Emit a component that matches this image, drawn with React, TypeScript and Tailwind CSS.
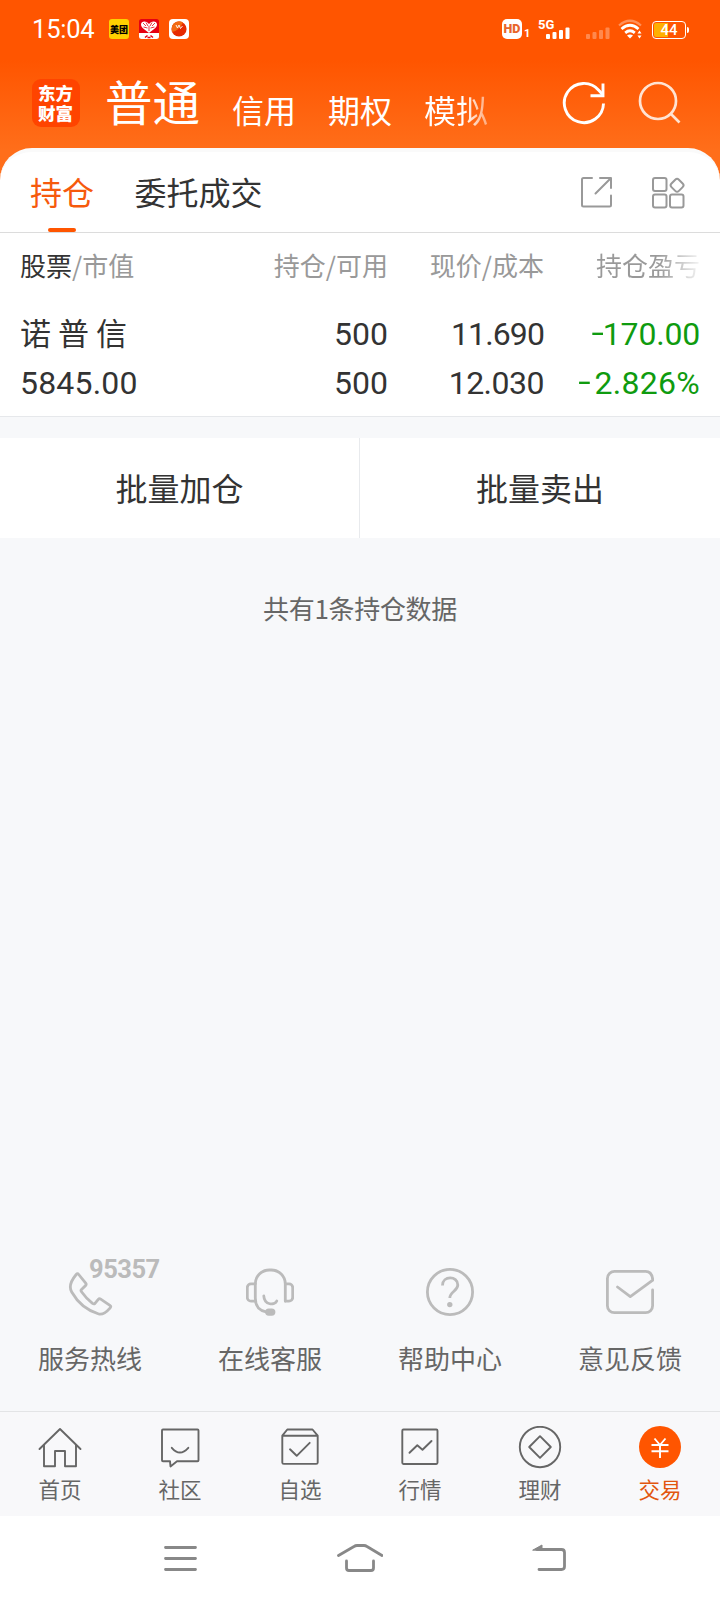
import type { ReactNode } from "react";

type IconProps = { children: ReactNode; size?: number; stroke?: number };

function LineIcon({ children, size = 44, stroke = 1.9 }: IconProps) {
  return (
    <svg
      width={size}
      height={size}
      viewBox={`0 0 ${size} ${size}`}
      fill="none"
      stroke="currentColor"
      strokeWidth={stroke}
      strokeLinecap="round"
      strokeLinejoin="round"
      className="block shrink-0"
    >
      {children}
    </svg>
  );
}

const services = [
  {
    label: "服务热线",
    badge: "95357",
    icon: (
      <path d="M10.2 6.500q1.300-1.500 2.500 0l7 8.600q1 1.400-.2 2.500l-4 3.800q-1 1 0 2.300 4.800 6.800 11 11.700 1.400 1 2.500 0l3.300-4q1-1.200 2.400-.3l9.200 6.200q1.600 1.100.3 2.500-6.500 7.500-11.500 6.200Q15 40.500 5.700 24 1.500 17 10.200 6.500Z" />
    ),
  },
  {
    label: "在线客服",
    icon: (
      <>
        <path d="M39.300 33V16a14 14 0 0 0-14-14h-2a14 14 0 0 0-14 14V30Q9.300 42 20 43.800" />
        <path d="M9.300 15.800H5a3.700 3.700 0 0 0-3.700 3.700v10A3.700 3.700 0 0 0 5 33.200h4.300M39.300 15.800H43a3.700 3.700 0 0 1 3.700 3.700v10a3.700 3.700 0 0 1-3.700 3.700h-3.700" />
        <path d="M17.800 28c.5 9.500 11 9.500 13 5" />
        <rect x="20.500" y="41.800" width="7.500" height="4.600" rx="2.300" fill="currentColor" />
      </>
    ),
  },
  {
    label: "帮助中心",
    icon: (
      <>
        <circle cx="24" cy="24" r="22.600" />
        <path d="M16.500 17.500C16.500 7.300 31.800 7.500 31.800 17c0 6-8 6.500-8 13" strokeLinecap="butt" />
        <circle cx="23.800" cy="36.600" r="1.300" fill="currentColor" />
      </>
    ),
  },
  {
    label: "意见反馈",
    icon: (
      <path d="M46.600 22V37.700a7 7 0 0 1-7 7H8.400a7 7 0 0 1-7-7V10.400a7 7 0 0 1 7-7h31.200q6.500 0 7.200 8.800L24.300 28.600 11.500 19" />
    ),
  },
];

const tabs = [
  {
    label: "首页",
    icon: (
      <>
        <path d="M1.500 23 22 3l20.500 20" />
        <path d="M6 19v21.200h11V25h10v15.200h11V19" />
      </>
    ),
  },
  {
    label: "社区",
    icon: (
      <>
        <path d="M5 3.500h34.500q1 0 1 1v29.700q0 1-1 1H19l-6.500 5.200-.5-5.200H5q-1 0-1-1V4.500q0-1 1-1Z" />
        <path d="M13.800 21.800q8 9.500 16.500 0" />
      </>
    ),
  },
  {
    label: "自选",
    icon: (
      <>
        <path d="M4.300 9.700h35.400v26.700q0 1.500-1.500 1.500H5.800q-1.500 0-1.500-1.500ZM4.300 9.700l5-6.200h25.200l5.200 6.200" />
        <path d="m12 23.300 6.700 6.500 13-13" />
      </>
    ),
  },
  {
    label: "行情",
    icon: (
      <>
        <rect x="4.300" y="3.500" width="35.200" height="34.500" rx="1.200" />
        <path d="m11.500 26.800 7.800-7.500 5.200 4.500 9-8.800" />
      </>
    ),
  },
  {
    label: "理财",
    icon: (
      <>
        <circle cx="22" cy="21" r="20.200" />
        <path d="m22 10.200 10.800 10.800L22 31.800 11.200 21Z" />
      </>
    ),
  },
  {
    label: "交易",
    active: true,
    icon: (
      <>
        <circle cx="22" cy="21" r="21" fill="#ff5500" stroke="none" />
        <path d="m16.500 12.500 5.500 6.500 5.500-6.500M22 19v13M13.500 19h17M13.500 25.200h17" stroke="#fff" strokeLinecap="butt" />
      </>
    ),
  },
];

function SignalBars({ dim = false }: { dim?: boolean }) {
  return (
    <svg width="24" height="12" viewBox="0 0 24 12" fill="#fff" opacity={dim ? 0.3 : 1} className="block">
      <rect x="0" y="7" width="4" height="5" rx="1" />
      <rect x="6.500" y="5" width="4" height="7" rx="1" />
      <rect x="13" y="3" width="4" height="9" rx="1" />
      <rect x="19.500" y="0.500" width="4" height="11.500" rx="1" />
    </svg>
  );
}

function StatusBar() {
  return (
    <div className="flex h-[58px] items-center pl-8 pr-8 text-white">
      <span className="w-[77px] pt-0.5 font-[Roboto] text-[25.500px] leading-none tracking-[-0.200px]">15:04</span>
      <div className="flex gap-2.5">
        <span className="flex size-5 items-center justify-center rounded-[3px] bg-[#ffd000] text-[9px] font-black leading-none text-black">
          美团
        </span>
        <svg width="20" height="20" viewBox="0 0 20 20" className="block">
          <rect width="20" height="20" rx="2.500" fill="#e60012" />
          <path d="M0 14h20v3.500a2.500 2.500 0 0 1-2.500 2.500h-15A2.500 2.500 0 0 1 0 17.500Z" fill="#fff" />
          <path d="M10 14C7 11 2 9 2 5.500S7 1 10 5c3-4 8-3 8 .5S13 11 10 14Z" fill="#fff" />
          <path d="M4 4l3 3M7 3.500 9 7M16 4l-3 3M13 3.500 11 7M4.500 8l4 1M15.500 8l-4 1M10 7v5" stroke="#e60012" strokeWidth="0.800" />
          <path d="M6 18.500l2.500-2M14 18.500l-2.500-2M8.500 18.500h3" stroke="#e60012" strokeWidth="1.500" />
        </svg>
        <svg width="20" height="20" viewBox="0 0 20 20" className="block">
          <rect width="20" height="20" rx="4" fill="#fff" />
          <circle cx="10" cy="10" r="7.600" fill="#e62a00" />
          <path d="M3 7a7.600 7.600 0 0 1 11-3.500Q10 12 3 13Z" fill="#f26a12" />
          <path d="m7 6 1.500 3 1.500-3 1.500 3.500 2-2.500" fill="none" stroke="#fff" strokeWidth="0.900" />
        </svg>
      </div>
      <div className="ml-auto flex h-5 items-end">
        <span className="flex size-5 items-center justify-center rounded-[5px] bg-white font-[Roboto] text-[12.500px] font-black leading-none text-[#e8662a]">
          HD
        </span>
        <span className="ml-0.5 w-[14px] font-[Roboto] text-[11px] font-bold leading-[10px]">1</span>
        <div className="relative ml-2 mr-4">
          <SignalBars />
          <span className="absolute -left-2 -top-[9px] font-[Roboto] text-[13px] font-bold leading-[13px]">5G</span>
        </div>
        <SignalBars dim />
        <svg width="25" height="20" viewBox="0 0 25 20" fill="none" stroke="#fff" className="ml-2 block">
          <path d="M1 6.500q11-9.500 22 0" strokeWidth="2.200" opacity="0.350" />
          <path d="M3.500 10q8.500-7.500 17 0" strokeWidth="2.800" />
          <path d="M7.200 13.800q4.800-4 9.600 0" strokeWidth="2.800" />
          <path d="m9 16.500 3 3 3-3q-3-2-6 0Z" fill="#fff" stroke="none" />
          <path d="m19.500 14.500 2-3 2 3ZM19.500 16.500l2 3 2-3Z" fill="#fff" stroke="none" />
        </svg>
        <div className="relative ml-[9px] mr-0.5 flex h-[18px] w-[34px] items-center justify-center rounded-[4px] border-[1.500px] border-white p-px">
          <span className="absolute inset-y-px left-px w-[14px] rounded-l-[2px] bg-[#ffb000]" />
          <span className="relative font-[Roboto] text-[15px] font-medium leading-none">44</span>
          <span className="absolute -right-[3.500px] top-[5px] h-[6px] w-[2px] rounded-r bg-white" />
        </div>
      </div>
    </div>
  );
}

function AppHeader() {
  return (
    <div className="flex h-[90px] pl-8 pr-[38px] text-white">
      <div className="mt-[21px] flex size-12 shrink-0 items-center justify-center rounded-[9px] bg-[#ff4400]">
        <span className="w-[36px] text-[17.500px] font-black leading-[20px] [word-break:break-all]">东方财富</span>
      </div>
      <div className="ml-[25px] flex items-baseline leading-[90px]">
        <span className="relative -top-0.5 text-[47.500px]">普通</span>
        <span className="ml-8 text-[32px]">信用</span>
        <span className="ml-8 text-[32px]">期权</span>
        <span className="ml-8 bg-[linear-gradient(90deg,#fff_62%,#ffffff70_100%)] bg-clip-text text-[32px] text-transparent">模拟</span>
      </div>
      <div className="ml-auto mt-[23px] flex gap-8">
        <LineIcon stroke={2.9}>
          <g strokeLinecap="butt" strokeLinejoin="miter">
            <path d="M41.500 22.500A19.600 19.600 0 1 1 37 9.500L41 14" />
            <path d="M41 2.500v12.300H28.500" />
          </g>
        </LineIcon>
        <div className="text-[#ffe3d2]">
          <LineIcon stroke={2.7}>
            <circle cx="20" cy="20" r="18" />
            <path d="m33 33 8.500 8.500" strokeLinecap="butt" />
          </LineIcon>
        </div>
      </div>
    </div>
  );
}

// Wider and higher than the plain hyphen of the number font
function Minus({ className }: { className: string }) {
  return <span className={`relative -top-0.5 inline-block origin-right scale-x-140 ${className}`}>-</span>;
}

function Sheet() {
  return (
    <div className="rounded-t-[32px] border-t-4 border-[#fafafa] bg-white">
      <div className="flex h-[81px] items-start border-b border-[#dcdcdc] pl-[30px] pr-[35px] text-[32px] leading-[78px]">
        <div className="relative h-20 text-[#f65a0d]">
          持仓
          <span className="absolute bottom-0 left-[18px] h-1 w-7 rounded-sm bg-[#ff5500]" />
        </div>
        <div className="ml-[40.500px] text-[#333]">委托成交</div>
        <div className="ml-auto mt-6 flex gap-[37px] text-[#999]">
          <LineIcon size={34} stroke={2}>
            <path d="M12 2H3.500Q2 2 2 3.500v25.500Q2 30.500 3.500 30.500h26q1.500 0 1.500-1.500V19.500M20 2h11v10M30.500 2.500 15.500 17.500" />
          </LineIcon>
          <LineIcon size={34} stroke={2}>
            <rect x="2" y="2" width="13.500" height="13" rx="2" />
            <rect x="2" y="18.500" width="13.500" height="13" rx="2" />
            <rect x="19" y="18.500" width="13.500" height="13" rx="2" />
            <rect x="20.800" y="4" width="10.500" height="10.500" rx="2.600" transform="rotate(45 26 9.300)" />
          </LineIcon>
        </div>
      </div>
      <div className="h-[184px] border-b border-[#e6e8eb] px-5">
        <div className="grid grid-cols-[1fr_160px_156px_156px] pt-0.5 text-right text-[26px] leading-[60px] text-[#999]">
          <div className="text-left">
            <span className="text-[#333]">股票</span>/市值
          </div>
          <div>持仓/可用</div>
          <div>现价/成本</div>
          <div>
            <span className="bg-[linear-gradient(90deg,#999_60%,#f4f4f4_100%)] bg-clip-text text-transparent">持仓盈亏</span>
          </div>
        </div>
        <div className="mt-[15px] grid grid-cols-[1fr_160px_156px_156px] text-right font-[Roboto,'Noto_Sans_CJK_SC',sans-serif] text-[32px] leading-[49px] text-[#333]">
          <div className="relative -top-[3px] text-left font-['Noto_Sans_CJK_SC',sans-serif] text-[31px]">诺 普 信</div>
          <div>500</div>
          <div className="tracking-[-0.900px]">11.690</div>
          <div className="tracking-[-0.200px] text-[#0f9b0f]">
            <Minus className="-mr-px" />
            170.00
          </div>
          <div className="text-left tracking-[0.200px]">5845.00</div>
          <div>500</div>
          <div className="tracking-[-0.500px]">12.030</div>
          <div className="tracking-[0.300px] text-[#0f9b0f]">
            <Minus className="mr-[3px]" />
            2.826%
          </div>
        </div>
      </div>
    </div>
  );
}

export default function App() {
  return (
    <div className="flex h-[1600px] w-[720px] flex-col overflow-hidden bg-[#f7f8fa] font-['Noto_Sans_CJK_SC',sans-serif]">
      <div className="bg-[linear-gradient(180deg,#ff5500_60px,#ff6e1a_150px)]">
        <StatusBar />
        <AppHeader />
        <Sheet />
      </div>

      <div className="mt-[21px] flex h-[100px] bg-white text-center text-[32px] leading-[99px] text-[#333]">
        <div className="w-[360px] border-r border-[#e8eaed]">批量加仓</div>
        <div className="flex-1">批量卖出</div>
      </div>
      <div className="mt-[50px] text-center text-[26px] leading-[40px] tracking-[-0.300px] text-[#666]">共有1条持仓数据</div>

      <div className="mt-auto grid h-[143px] grid-cols-4">
        {services.map((s) => (
          <div key={s.label} className="relative flex flex-col items-center text-[#bbb]">
            <LineIcon size={48} stroke={2.8}>
              {s.icon}
            </LineIcon>
            {s.badge && (
              <span className="absolute left-[89px] top-[-13px] font-[Roboto] text-[25.500px] font-bold leading-[28px] tracking-[-0.500px]">
                {s.badge}
              </span>
            )}
            <span className="mt-[22px] text-[26px] leading-10 text-[#666]">{s.label}</span>
          </div>
        ))}
      </div>

      <div className="grid h-[105px] grid-cols-6 border-t border-[#e3e4e6] bg-[#f8f8fa] pt-3.5">
        {tabs.map((t) => (
          <div key={t.label} className={`flex flex-col items-center ${t.active ? "text-[#e2560f]" : "text-[#666]"}`}>
            <LineIcon>{t.icon}</LineIcon>
            <span className="mt-1 text-[21.500px] leading-[30px]">{t.label}</span>
          </div>
        ))}
      </div>

      {/* Android navigation keys */}
      <div className="flex h-[84px] bg-white pl-[159px] pt-5 text-[#888]">
        <LineIcon size={44} stroke={2.8}>
          <path d="M6.500 11.500h30M6.500 22.500h30M6.500 33.500h30" />
        </LineIcon>
        <div className="ml-[134px]">
          <LineIcon size={46} stroke={2.8}>
            <path d="m1.500 19.500 15.500-9q1.500-1 3-1h7q1.500 0 3 1l15 9M9.500 25v7q0 2.500 2.500 2.500h22q2.500 0 2.500-2.500v-7" />
          </LineIcon>
        </div>
        <div className="ml-[148px]">
          <LineIcon size={44} stroke={2.8}>
            <path d="M6 13.500h24.500q3 0 3 3v14q0 3-3 3H8" />
            <path d="m2 14 9-5v5Z" fill="currentColor" strokeWidth="1" />
          </LineIcon>
        </div>
      </div>
    </div>
  );
}
